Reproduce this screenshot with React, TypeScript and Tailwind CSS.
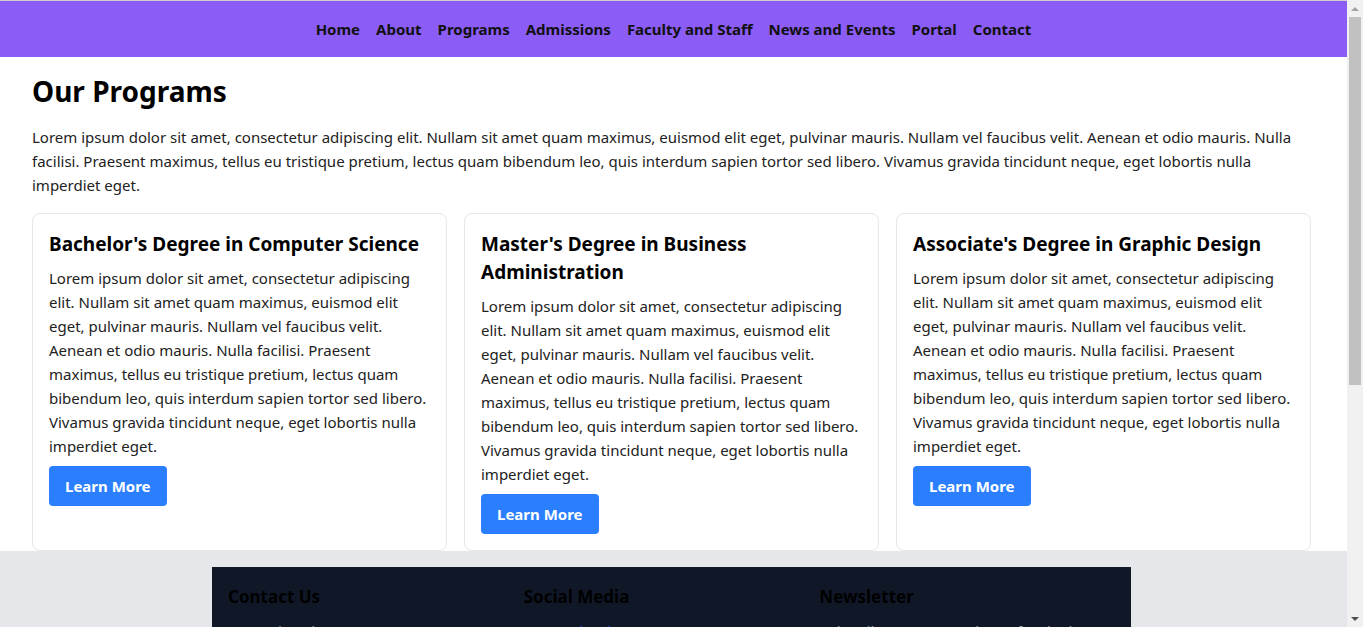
import React from "react";

const navLinks = ["Home", "About", "Programs", "Admissions", "Faculty and Staff", "News and Events", "Portal", "Contact"];

const lorem =
  "Lorem ipsum dolor sit amet, consectetur adipiscing elit. Nullam sit amet quam maximus, euismod elit eget, pulvinar mauris. Nullam vel faucibus velit. Aenean et odio mauris. Nulla facilisi. Praesent maximus, tellus eu tristique pretium, lectus quam bibendum leo, quis interdum sapien tortor sed libero. Vivamus gravida tincidunt neque, eget lobortis nulla imperdiet eget.";

const programs = [
  "Bachelor's Degree in Computer Science",
  "Master's Degree in Business Administration",
  "Associate's Degree in Graphic Design",
];

// window scrollbar as it shows in the screenshot
function Scrollbar() {
  return (
    <div className="fixed top-0 right-0 h-screen w-[16px] bg-[#f1f1f1] flex flex-col items-center">
      <div className="h-[17px] flex items-center justify-center">
        <div className="w-0 h-0 border-l-[4px] border-r-[4px] border-b-[4px] border-l-transparent border-r-transparent border-b-[#a3a3a3]" />
      </div>
      <div className="w-[12px] h-[368px] bg-[#c1c1c1]" />
      <div className="flex-1" />
      <div className="h-[17px] flex items-center justify-center">
        <div className="w-0 h-0 border-l-[4px] border-r-[4px] border-t-[4px] border-l-transparent border-r-transparent border-t-[#505050]" />
      </div>
    </div>
  );
}

export default function App() {
  return (
    <div className="min-h-screen bg-white text-[#111] font-['Noto_Sans',sans-serif]">
      <div className="mr-[16px] border-t border-[#cfcfcf]">
        {/* Navigation */}
        <nav className="bg-[#8b5cf6] py-4">
          <ul className="flex justify-center gap-4">
            {navLinks.map((link) => (
              <li key={link}>
                <a href="#" className="text-[15px] leading-6 font-bold text-[#111]">
                  {link}
                </a>
              </li>
            ))}
          </ul>
        </nav>

        <main className="px-8 pt-4">
          <h1 className="text-[28px] leading-9 font-bold text-black mb-4">Our Programs</h1>
          <p className="text-[15px] leading-6 text-[#222] mb-4">{lorem}</p>

          <div className="grid grid-cols-[415px_415px_415px] gap-[17px]">
            {programs.map((title) => (
              <div key={title} className="bg-white border border-gray-200 rounded-lg p-4">
                <h2 className="text-[19px] leading-7 font-bold text-black mb-2">{title}</h2>
                <p className="text-[15px] leading-6 text-[#222] mb-2">{lorem}</p>
                <button className="bg-blue-500 text-white font-bold text-[15px] leading-6 px-4 py-2 rounded">
                  Learn More
                </button>
              </div>
            ))}
          </div>
        </main>

        {/* Footer */}
        <footer className="bg-gray-200 py-4">
          <div className="w-[919px] ml-[212px] bg-gray-900 p-4">
            <div className="grid grid-cols-3">
              <div>
                <h3 className="text-[17px] leading-7 font-bold text-black mb-2">Contact Us</h3>
                <p className="text-[15px] leading-6 text-gray-400">123 University Avenue</p>
                <p className="text-[15px] leading-6 text-gray-400">Springfield, ST 12345</p>
                <p className="text-[15px] leading-6 text-gray-400">Phone: (555) 123-4567</p>
                <p className="text-[15px] leading-6 text-gray-400">Email: info@university.edu</p>
              </div>
              <div>
                <h3 className="text-[17px] leading-7 font-bold text-black mb-2">Social Media</h3>
                <ul>
                  {["Facebook", "Twitter", "Instagram", "LinkedIn"].map((s) => (
                    <li key={s}>
                      <a href="#" className="text-[15px] leading-6 text-blue-700 pl-6">
                        {s}
                      </a>
                    </li>
                  ))}
                </ul>
              </div>
              <div>
                <h3 className="text-[17px] leading-7 font-bold text-black mb-2">Newsletter</h3>
                <p className="text-[15px] leading-6 text-gray-400 mb-2">
                  Subscribe to our newsletter for the latest updates.
                </p>
                <div className="flex gap-2">
                  <input
                    type="email"
                    placeholder="Enter your email"
                    className="bg-white text-[15px] px-3 py-2 rounded w-[180px]"
                  />
                  <button className="bg-blue-500 text-white font-bold text-[15px] px-4 py-2 rounded">
                    Subscribe
                  </button>
                </div>
              </div>
            </div>
            <p className="text-center text-[14px] leading-6 text-gray-500 mt-8 pb-40">
              © 2024 University. All rights reserved.
            </p>
          </div>
        </footer>
      </div>
      <Scrollbar />
    </div>
  );
}
